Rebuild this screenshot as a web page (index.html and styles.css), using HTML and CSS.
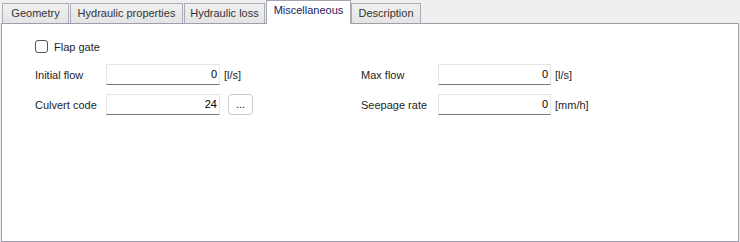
FILE: index.html
```html
<!DOCTYPE html>
<html lang="en">
<head>
    <meta charset="UTF-8">
    <title>Culvert - Miscellaneous</title>
    <link rel="stylesheet" href="styles.css">
</head>
<body>
    <div class="tabs">
        <div class="tab tab-geometry">Geometry</div>
        <div class="tab tab-hydraulic">Hydraulic properties</div>
        <div class="tab tab-loss">Hydraulic loss</div>
        <div class="tab tab-misc active">Miscellaneous</div>
        <div class="tab tab-desc">Description</div>
    </div>

    <div class="panel">
        <label class="check-row">
            <span class="checkbox"></span>
            <span>Flap gate</span>
        </label>

        <div class="form">
            <div class="group">
                <div class="row">
                    <span class="label">Initial flow</span>
                    <div class="field">0</div>
                    <span class="unit">[l/s]</span>
                </div>
                <div class="row">
                    <span class="label">Culvert code</span>
                    <div class="field">24</div>
                    <button class="dots">...</button>
                </div>
            </div>
            <div class="group">
                <div class="row">
                    <span class="label label-right">Max flow</span>
                    <div class="field field-right">0</div>
                    <span class="unit">[l/s]</span>
                </div>
                <div class="row">
                    <span class="label label-right">Seepage rate</span>
                    <div class="field field-right">0</div>
                    <span class="unit">[mm/h]</span>
                </div>
            </div>
        </div>
    </div>
</body>
</html>
```

FILE: styles.css
```css
body {
    margin: 0;
    background: #efefef;
    font-family: "Liberation Sans", Arial, sans-serif;
    font-size: 11px;
    color: #1e1e1e;
    width: 740px;
    height: 242px;
    overflow: hidden;
}
.tabs {
    display: flex;
    align-items: flex-end;
    height: 23px;
    padding-left: 2px;
}
.tab {
    box-sizing: border-box;
    height: 20px;
    margin-right: 1px;
    border: 1px solid #acacb8;
    border-bottom: none;
    background: linear-gradient(#f0f0f0, #e4e4e4);
    color: #333;
    text-align: center;
    line-height: 19px;
}
.tab-geometry { width: 67px; }
.tab-hydraulic { width: 113px; }
.tab-loss { width: 81px; }
.tab-misc { width: 85px; }
.tab-desc { width: 70px; }
.tab.active {
    position: relative;
    z-index: 1;
    height: 24px;
    margin-bottom: -1px;
    margin-right: 0;
    background: #fff;
    color: #1c1c5e;
    line-height: 19px;
    border-color: #a4a4b0;
}
.panel {
    box-sizing: border-box;
    margin: 0 1px 0 1px;
    height: 219px;
    background: #fff;
    border: 1px solid #9d9dab;
    box-shadow: 0 1px 0 #cfcfd6;
    padding: 16px 0 0 33px;
}
.check-row {
    display: flex;
    align-items: center;
    gap: 6px;
    height: 13px;
}
.checkbox {
    box-sizing: border-box;
    width: 13px;
    height: 13px;
    border: 1px solid #555;
    border-radius: 3px;
    background: #fff;
}
.form {
    display: flex;
    margin-top: 11px;
}
.group {
    display: flex;
    flex-direction: column;
    gap: 9px;
    width: 326px;
}
.row {
    display: flex;
    align-items: center;
    height: 21px;
}
.label {
    width: 71px;
}
.label-right {
    width: 77px;
}
.field {
    box-sizing: border-box;
    width: 114px;
    height: 21px;
    border: 1px solid #e4e4e4;
    border-bottom: 1px solid #7a7a7a;
    text-align: right;
    padding-right: 2px;
    line-height: 19px;
    color: #000;
}
.field-right {
    width: 113px;
}
.unit {
    margin-left: 4px;
}
.dots {
    box-sizing: border-box;
    width: 25px;
    height: 21px;
    margin-left: 8px;
    padding: 0 0 2px 0;
    border: 1px solid #cacaca;
    border-radius: 4px;
    background: #fff;
    font-family: inherit;
    font-size: 11px;
    color: #222;
}
```
